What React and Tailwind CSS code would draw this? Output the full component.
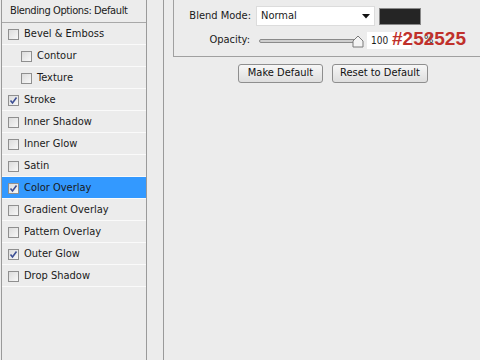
import React from 'react';

const items = [
  { label: 'Bevel & Emboss', checked: false },
  { label: 'Contour', checked: false, indent: true },
  { label: 'Texture', checked: false, indent: true },
  { label: 'Stroke', checked: true },
  { label: 'Inner Shadow', checked: false },
  { label: 'Inner Glow', checked: false },
  { label: 'Satin', checked: false },
  { label: 'Color Overlay', checked: true, active: true },
  { label: 'Gradient Overlay', checked: false },
  { label: 'Pattern Overlay', checked: false },
  { label: 'Outer Glow', checked: true },
  { label: 'Drop Shadow', checked: false },
];

function Checkbox({ checked }) {
  return (
    <div className="w-[11px] h-[11px] border border-[#8f8f8f] bg-gradient-to-br from-[#dcdcdc] to-[#f8f8f8] flex items-center justify-center shrink-0">
      {checked && (
        <svg width="9" height="9" viewBox="0 0 9 9">
          <path d="M1.5 4.5 L3.5 7 L7.5 1.5" fill="none" stroke="#3d4f94" strokeWidth="1.6" />
        </svg>
      )}
    </div>
  );
}

function Button({ children, w }) {
  return (
    <div className={`${w} h-[19px] border border-[#8e8e8e] rounded-[3px] bg-gradient-to-b from-[#f7f7f7] to-[#dedede] flex items-center justify-center text-[11px] text-[#111]`}>
      {children}
    </div>
  );
}

export default function App() {
  return (
    <div
      className="w-[480px] h-[360px] bg-[#ececec] flex overflow-hidden text-[11px] text-[#1a1a1a]"
      style={{ fontFamily: 'Tahoma, "DejaVu Sans Condensed", "Liberation Sans", sans-serif' }}
    >
      {/* style list */}
      <div className="ml-[1px] w-[146px] border-l border-r border-[#9a9a9a] flex flex-col">
        <div className="h-[23px] border-b border-[#a8a8a8] flex items-center pl-[8px] pt-px tracking-[-0.4px]">
          Blending Options: Default
        </div>
        {items.map((it) => (
          <div
            key={it.label}
            className={`h-[22px] border-b border-[#fafafa] flex items-center gap-[5px] pt-px ${it.indent ? 'pl-[19px]' : 'pl-[6px]'} ${it.active ? 'bg-[#3399ff]' : ''}`}
          >
            <Checkbox checked={it.checked} />
            <span>{it.label}</span>
          </div>
        ))}
      </div>

      {/* settings area */}
      <div className="ml-[16px] flex-1 border-l border-[#9a9a9a] flex flex-col">
        <div className="ml-[9px] h-[57px] border-l border-b border-[#a0a0a0] relative">
          <div className="flex items-center h-[20px] mt-[6px]">
            <span className="w-[82px] text-right pr-[5px]">Blend Mode:</span>
            <div className="w-[119px] h-[20px] bg-white border border-[#dcdcdc] flex items-center pl-[4px] justify-between pr-[4px]">
              <span>Normal</span>
              <svg width="8" height="5" viewBox="0 0 8 5">
                <path d="M0 0 L8 0 L4 4.5 Z" fill="#111" />
              </svg>
            </div>
            <div className="ml-[4px] w-[42px] h-[17px] bg-[#252525] border border-[#888]" />
          </div>
          <div className="flex items-center h-[17px] mt-[6px]">
            <span className="w-[82px] text-right pr-[6px]">Opacity:</span>
            <div className="ml-[3px] relative w-[104px] h-[14px] flex items-center">
              <div className="w-[101px] h-[4px] rounded-full border border-[#8a8a8a] bg-[#cfcfcf]" />
              <svg className="absolute left-[93px] top-[1px]" width="12" height="13" viewBox="0 0 12 13">
                <path d="M1 12 L1 6 L6 1 L11 6 L11 12 Z" fill="#f4f4f4" stroke="#7a7a7a" />
              </svg>
            </div>
            <div className="ml-[4px] w-[44px] h-[17px] bg-white flex items-center pl-[4px] text-[10px]">100</div>
            <span className="ml-[13px] text-[#333]">%</span>
          </div>
          <span
            className="absolute left-[218px] top-[29px] text-[19px] font-bold text-[#c0302b] leading-none"
            style={{ fontFamily: '"Liberation Sans", Arial, sans-serif' }}
          >
            #252525
          </span>
        </div>
        <div className="flex gap-[9px] mt-[7px] ml-[74px]">
          <Button w="w-[85px]">Make Default</Button>
          <Button w="w-[96px]">Reset to Default</Button>
        </div>
      </div>
    </div>
  );
}
